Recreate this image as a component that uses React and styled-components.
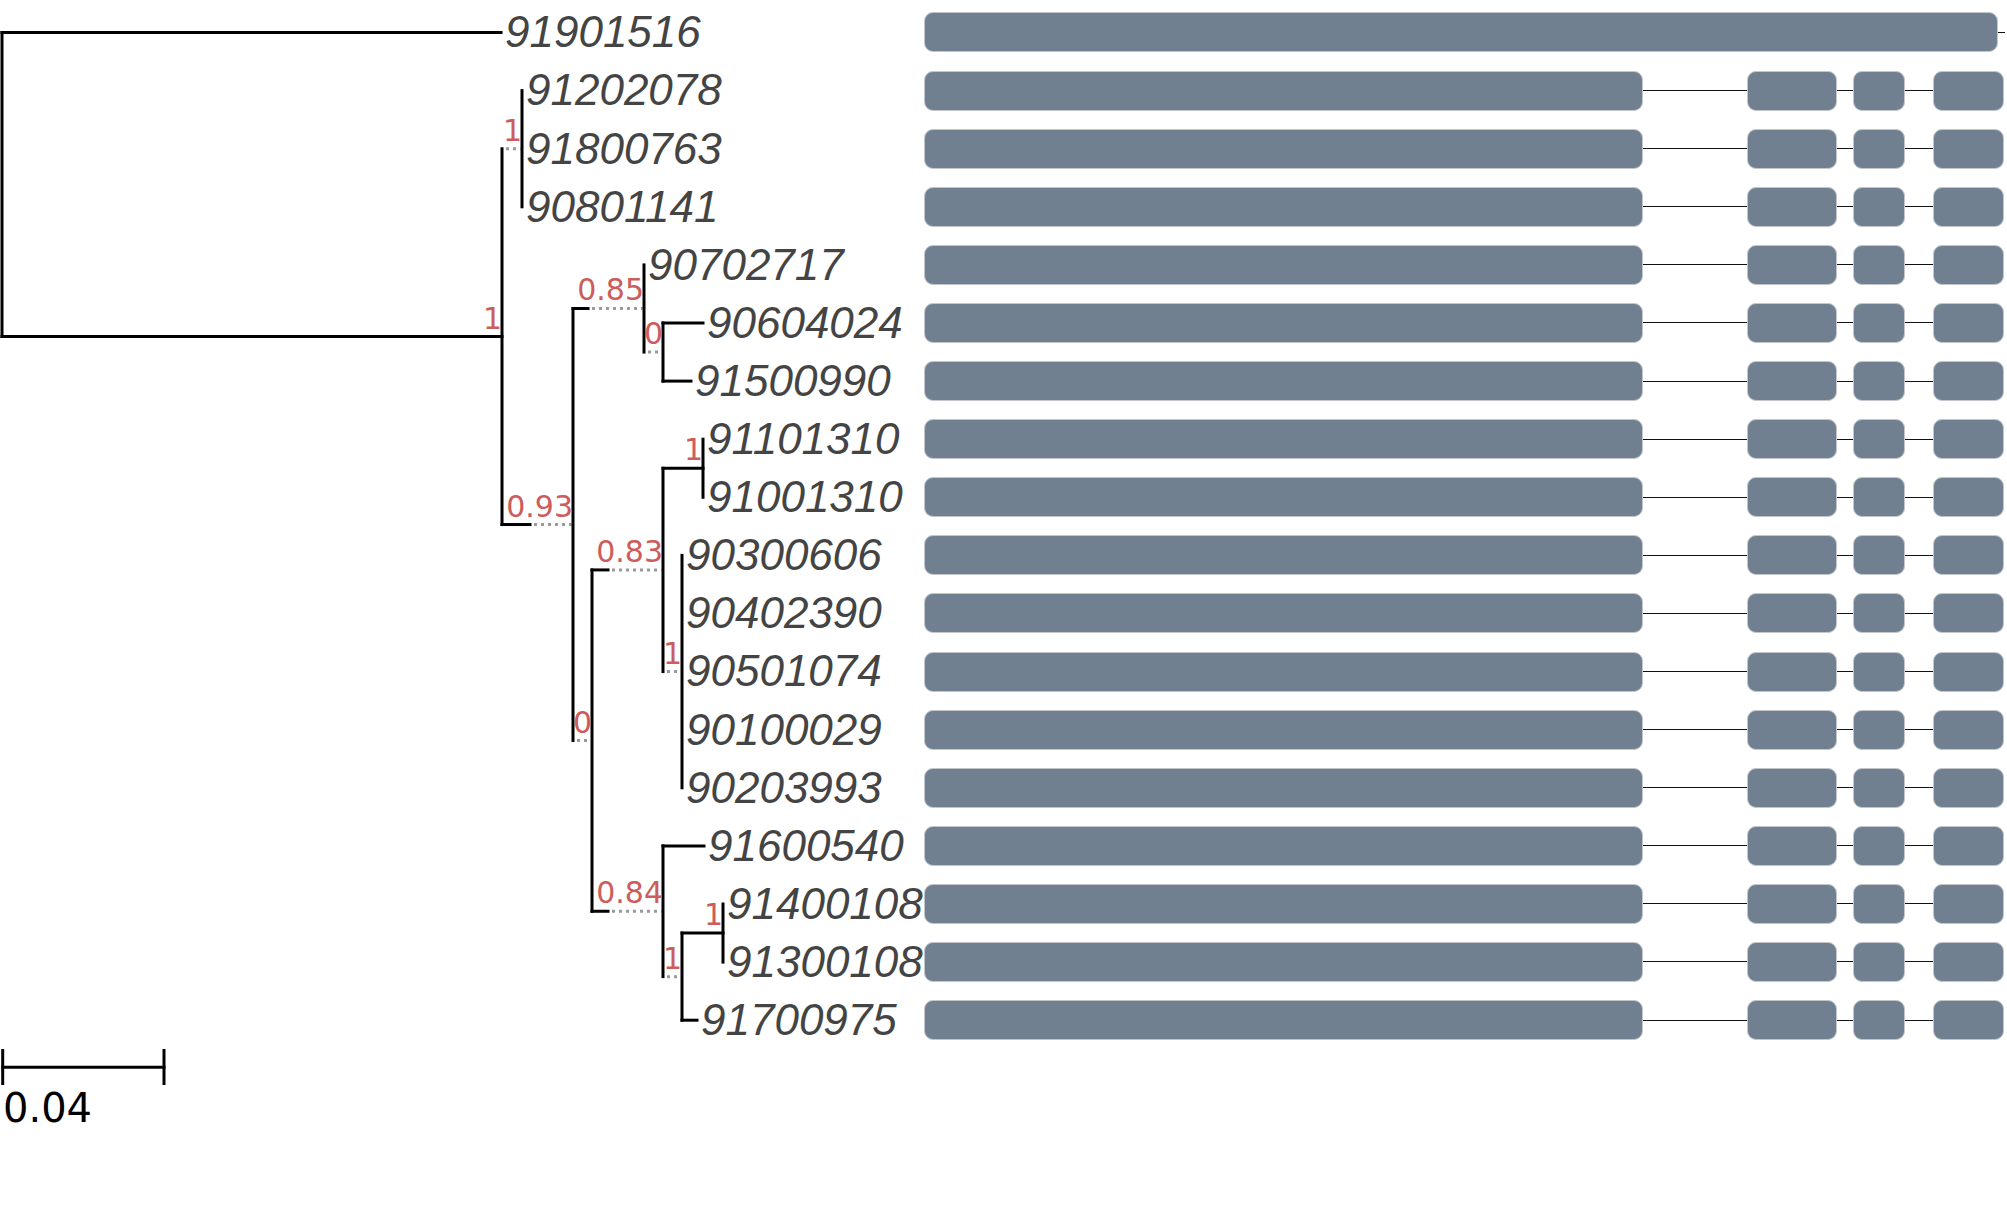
import React from "react";
import styled, { createGlobalStyle } from "styled-components";

const GlobalStyle = createGlobalStyle`
    html, body {
        margin: 0;
        padding: 0;
        background: #fff;
    }
    body {
        font-family: "DejaVu Sans", sans-serif;
    }
`;

const Page = styled.div`
    width: 2007px;
    height: 1212px;
    display: flex;
    flex-direction: column;
    background: #fff;
    overflow: hidden;
`;

const Figure = styled.div`
    display: flex;
    height: 1045px;
`;

const TreeCanvas = styled.svg`
    flex: 0 0 924px;
    display: block;
    overflow: visible;
`;

const Branch = styled.line`
    stroke: #000;
    stroke-width: 3;
    stroke-linecap: square;
`;

const Extension = styled.line`
    stroke: #9a9a9a;
    stroke-width: 3;
    stroke-dasharray: 3 4;
`;

const LeafName = styled.text`
    font-family: "Liberation Sans", Arial, sans-serif;
    font-style: italic;
    font-size: 44px;
    fill: #444;
`;

const Support = styled.text`
    font-family: "DejaVu Sans", sans-serif;
    font-size: 30px;
    fill: #cd5c5c;
    text-anchor: end;
`;

const Tracks = styled.div`
    flex: 1;
    display: flex;
    flex-direction: column;
    padding-top: 3.45px;
`;

const TrackRow = styled.div`
    flex: 0 0 58.1px;
    height: 58.1px;
    display: flex;
    align-items: center;
`;

const Exon = styled.div`
    flex: 0 0 ${(p) => p.$w}px;
    height: 40px;
    box-sizing: border-box;
    background: #708090;
    border: 1px solid #c3c7cc;
    border-radius: 9px;
`;

const Intron = styled.div`
    flex: 0 0 ${(p) => p.$w}px;
    height: 1px;
    background: #111;
`;

const ScaleBar = styled.div`
    display: flex;
    flex-direction: column;
    align-items: flex-start;
`;

const ScaleLine = styled.svg`
    display: block;
`;

const ScaleLabel = styled.span`
    font-family: "DejaVu Sans", sans-serif;
    font-size: 40px;
    line-height: 38px;
    color: #000;
    margin-left: 3px;
`;

const ROW_TOP = 32.5;
const ROW_GAP = 58.1;

const L = (name, x, solidEnd) => ({ name, x, solidEnd: solidEnd ?? x });
const N = (support, x, solidEnd, children) => ({ support, x, solidEnd, children });

const tree = N(null, 2, 2, [
    L("91901516", 501),
    N("1", 502, 502, [
        N("1", 522, 502, [L("91202078", 522), L("91800763", 522), L("90801141", 522)]),
        N("0.93", 573, 530, [
            N("0.85", 644, 588, [
                L("90702717", 644),
                N("0", 663, 644, [L("90604024", 703), L("91500990", 691)]),
            ]),
            N("0", 592, 573, [
                N("0.83", 663, 608, [
                    N("1", 703, 703, [L("91101310", 703), L("91001310", 703)]),
                    N(
                        "1",
                        682,
                        663,
                        ["90300606", "90402390", "90501074", "90100029", "90203993"].map((n) => L(n, 682))
                    ),
                ]),
                N("0.84", 663, 608, [
                    L("91600540", 704),
                    N("1", 682, 663, [
                        N("1", 723, 723, [L("91400108", 723), L("91300108", 723)]),
                        L("91700975", 697),
                    ]),
                ]),
            ]),
        ]),
    ]),
]);

// rows get their y from the order of the leaves, inner nodes sit midway
function layout(node, rows) {
    if (!node.children) {
        const y = ROW_TOP + ROW_GAP * rows.length;
        rows.push(node.name);
        return { ...node, y };
    }
    const kids = node.children.map((c) => layout(c, rows));
    return { ...node, kids, y: (kids[0].y + kids[kids.length - 1].y) / 2 };
}

function collect(node, parentX, out) {
    if (parentX != null) {
        if (node.solidEnd > parentX) {
            out.solid.push({ x1: parentX, x2: node.solidEnd, y1: node.y, y2: node.y });
        }
        const from = Math.max(parentX, node.solidEnd);
        if (node.x - from > 6) {
            out.dotted.push({ x1: from + 4, x2: node.x - 1.5, y: node.y });
        }
    }
    if (node.kids) {
        const last = node.kids[node.kids.length - 1];
        out.solid.push({ x1: node.x, x2: node.x, y1: node.kids[0].y, y2: last.y });
        if (node.support) out.support.push({ text: node.support, x: node.x, y: node.y - 8 });
        node.kids.forEach((k) => collect(k, node.x, out));
    } else {
        out.leaves.push({ name: node.name, x: node.x + 4, y: node.y + 14.8 });
    }
}

const rows = [];
const laidOut = layout(tree, rows);
const parts = { solid: [], dotted: [], support: [], leaves: [] };
collect(laidOut, null, parts);

const fullGene = [{ exon: 1074 }, { intron: 7 }];
const splitGene = [
    { exon: 719 },
    { intron: 104 },
    { exon: 90 },
    { intron: 16 },
    { exon: 52 },
    { intron: 28 },
    { exon: 71 },
];

const Track = ({ segments }) => (
    <TrackRow>
        {segments.map((s, i) =>
            s.exon ? <Exon key={i} $w={s.exon} /> : <Intron key={i} $w={s.intron} />
        )}
    </TrackRow>
);

const App = () => {
    return (
        <Page>
            <GlobalStyle />
            <Figure>
                <TreeCanvas width="924" height="1045" viewBox="0 0 924 1045">
                    {parts.dotted.map((d, i) => (
                        <Extension key={"d" + i} x1={d.x1} x2={d.x2} y1={d.y} y2={d.y} />
                    ))}
                    {parts.solid.map((s, i) => (
                        <Branch key={"s" + i} x1={s.x1} x2={s.x2} y1={s.y1} y2={s.y2} />
                    ))}
                    {parts.support.map((s, i) => (
                        <Support key={"p" + i} x={s.x} y={s.y}>
                            {s.text}
                        </Support>
                    ))}
                    {parts.leaves.map((l) => (
                        <LeafName key={l.name} x={l.x} y={l.y}>
                            {l.name}
                        </LeafName>
                    ))}
                </TreeCanvas>
                <Tracks>
                    {rows.map((name, i) => (
                        <Track key={name} segments={i === 0 ? fullGene : splitGene} />
                    ))}
                </Tracks>
            </Figure>
            <ScaleBar>
                <ScaleLine width="170" height="44" viewBox="0 0 170 44">
                    <Branch x1="2.7" x2="164" y1="22.3" y2="22.3" />
                    <Branch x1="2.7" x2="2.7" y1="5.5" y2="38.5" />
                    <Branch x1="164" x2="164" y1="5.5" y2="38.5" />
                </ScaleLine>
                <ScaleLabel>0.04</ScaleLabel>
            </ScaleBar>
        </Page>
    );
};

export default App;
